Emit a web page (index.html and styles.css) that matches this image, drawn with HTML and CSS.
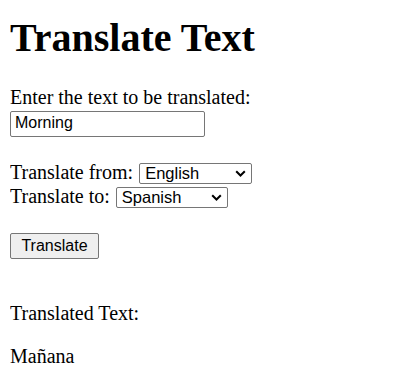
FILE: index.html
```html
<!DOCTYPE html>
<html>
<head>
<meta charset="utf-8">
<title>Translate Text</title>
<link rel="stylesheet" href="styles.css">
</head>
<body class="page">
<h1 class="title">Translate Text</h1>
<form class="form">
  <label class="label-line" for="txt">Enter the text to be translated:</label>
  <input class="field" id="txt" type="text" value="Morning">
  <div class="row row-first">
    <label class="label" for="from">Translate from:</label>
    <select class="select select-from" id="from"><option>English</option><option>Spanish</option></select>
  </div>
  <div class="row">
    <label class="label" for="to">Translate to:</label>
    <select class="select select-to" id="to"><option>Spanish</option><option>English</option></select>
  </div>
  <button class="btn" type="button">Translate</button>
</form>
<p class="para para-first">Translated Text:</p>
<p class="para">Mañana</p>
</body>
</html>
```
FILE: styles.css
```css
.page {
  font-family: "Liberation Serif", "Times New Roman", serif;
  font-size: 20px;
  line-height: 23px;
  margin: 0 10px;
  padding-top: 14.5px;
  color: #000;
  background: #fff;
}
.title {
  font-size: 40px;
  line-height: 46px;
  font-weight: bold;
  margin: 0 0 25px;
}
.form {
  display: flex;
  flex-direction: column;
  align-items: flex-start;
  margin: 0;
}
.label-line {
  display: block;
  line-height: 23px;
}
.row {
  display: flex;
  align-items: flex-start;
  gap: 6px;
  height: 24px;
  line-height: 24px;
}
.row-first {
  margin-top: 23.25px;
}
.field, .select, .btn {
  font-family: "Liberation Sans", Arial, sans-serif;
  font-size: 16px;
  color: #000;
  box-sizing: border-box;
  margin: 0;
}
.field {
  display: block;
  margin-top: 2.5px;
  width: 195px;
  height: 26px;
  padding: 0 4px 2px;
  border: 1px solid #767676;
  border-radius: 2px;
  background: #fff;
}
.select {
  -webkit-appearance: none;
  appearance: none;
  font-size: 16.5px;
  margin-top: 2.5px;
  height: 21px;
  line-height: 19px;
  padding: 0 20px 0 5px;
  border: 1px solid #767676;
  border-radius: 2px;
  background-color: #fff;
  background-image: url("data:image/svg+xml,%3Csvg xmlns='http://www.w3.org/2000/svg' width='11' height='7' viewBox='0 0 11 7'%3E%3Cpath d='M1.2 1.2 L5.5 5.5 L9.8 1.2' fill='none' stroke='%23000' stroke-width='2'/%3E%3C/svg%3E");
  background-repeat: no-repeat;
  background-position: right 5px center;
  background-size: 11px 7px;
}
.select-from {
  width: 113px;
}
.select-to {
  width: 112px;
}
.btn {
  margin-top: 24.75px;
  width: 89px;
  height: 26px;
  padding: 0 6px 1px;
  border: 1px solid #767676;
  border-radius: 2px;
  background: #efefef;
}
.para {
  margin: 20px 0;
}
.para-first {
  margin-top: 42.7px;
}
```
